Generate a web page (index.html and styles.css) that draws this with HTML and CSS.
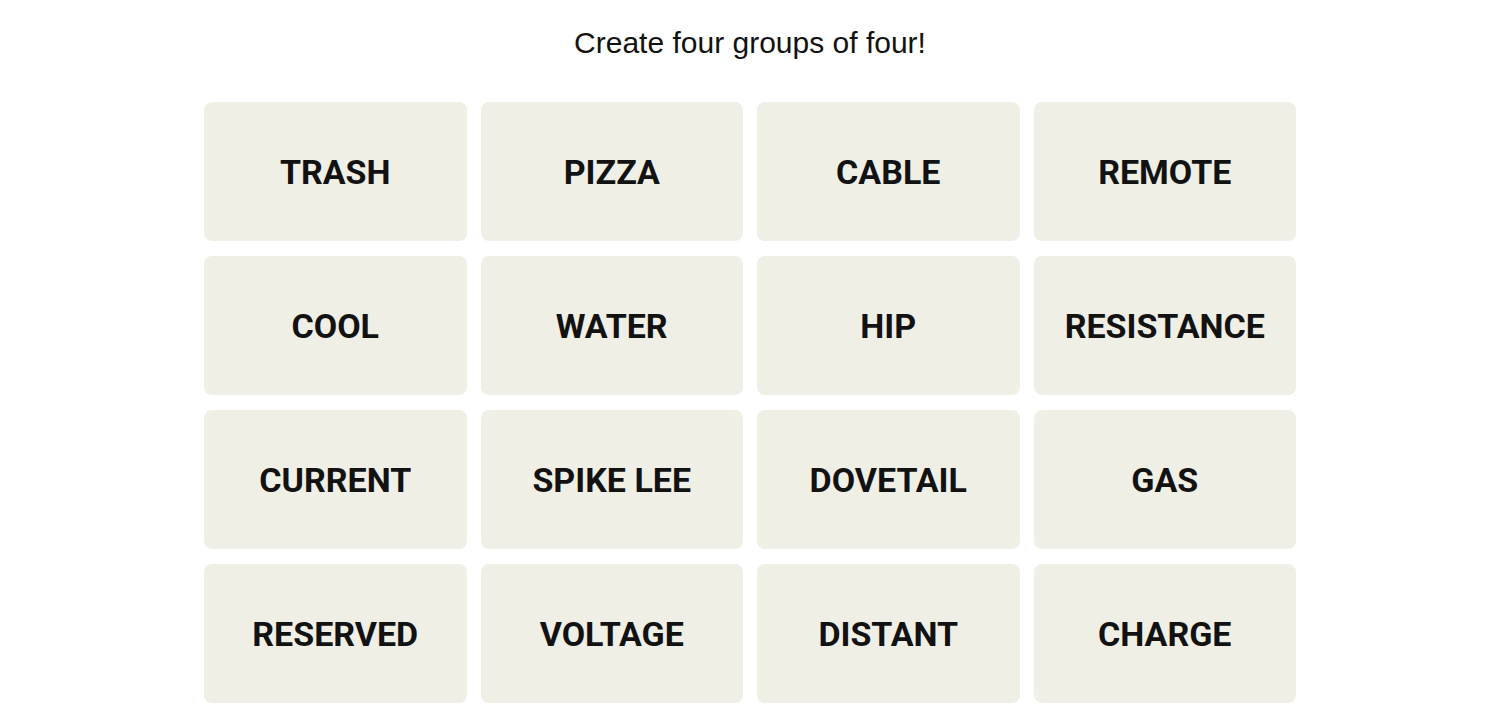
FILE: index.html
```html
<!DOCTYPE html>
<html lang="en">
<head>
    <meta charset="UTF-8">
    <meta name="viewport" content="width=device-width, initial-scale=1.0">
    <title>Connections</title>
    <link rel="stylesheet" href="styles.css">
</head>
<body>
    <p class="prompt">Create four groups of four!</p>
    <div class="board">
        <button class="card">TRASH</button>
        <button class="card">PIZZA</button>
        <button class="card">CABLE</button>
        <button class="card">REMOTE</button>
        <button class="card">COOL</button>
        <button class="card">WATER</button>
        <button class="card">HIP</button>
        <button class="card">RESISTANCE</button>
        <button class="card">CURRENT</button>
        <button class="card">SPIKE LEE</button>
        <button class="card">DOVETAIL</button>
        <button class="card">GAS</button>
        <button class="card">RESERVED</button>
        <button class="card">VOLTAGE</button>
        <button class="card">DISTANT</button>
        <button class="card">CHARGE</button>
    </div>
</body>
</html>
```

FILE: styles.css
```css
body {
    margin: 0;
    background: #fff;
    color: #121212;
    font-family: "Liberation Sans", Arial, sans-serif;
}
.prompt {
    margin: 0;
    padding-top: 23px;
    height: 102px;
    box-sizing: border-box;
    text-align: center;
    font-size: 30px;
    line-height: 40px;
}
.board {
    width: 1092px;
    margin: 0 auto;
    display: grid;
    grid-template-columns: repeat(4, 1fr);
    grid-auto-rows: 139px;
    column-gap: 14px;
    row-gap: 15px;
}
.card {
    border: none;
    border-radius: 8px;
    background-color: #efefe6;
    color: #121212;
    font-family: Roboto, "Liberation Sans", sans-serif;
    font-weight: 700;
    font-size: 34px;
    padding: 0;
    cursor: pointer;
}
```
